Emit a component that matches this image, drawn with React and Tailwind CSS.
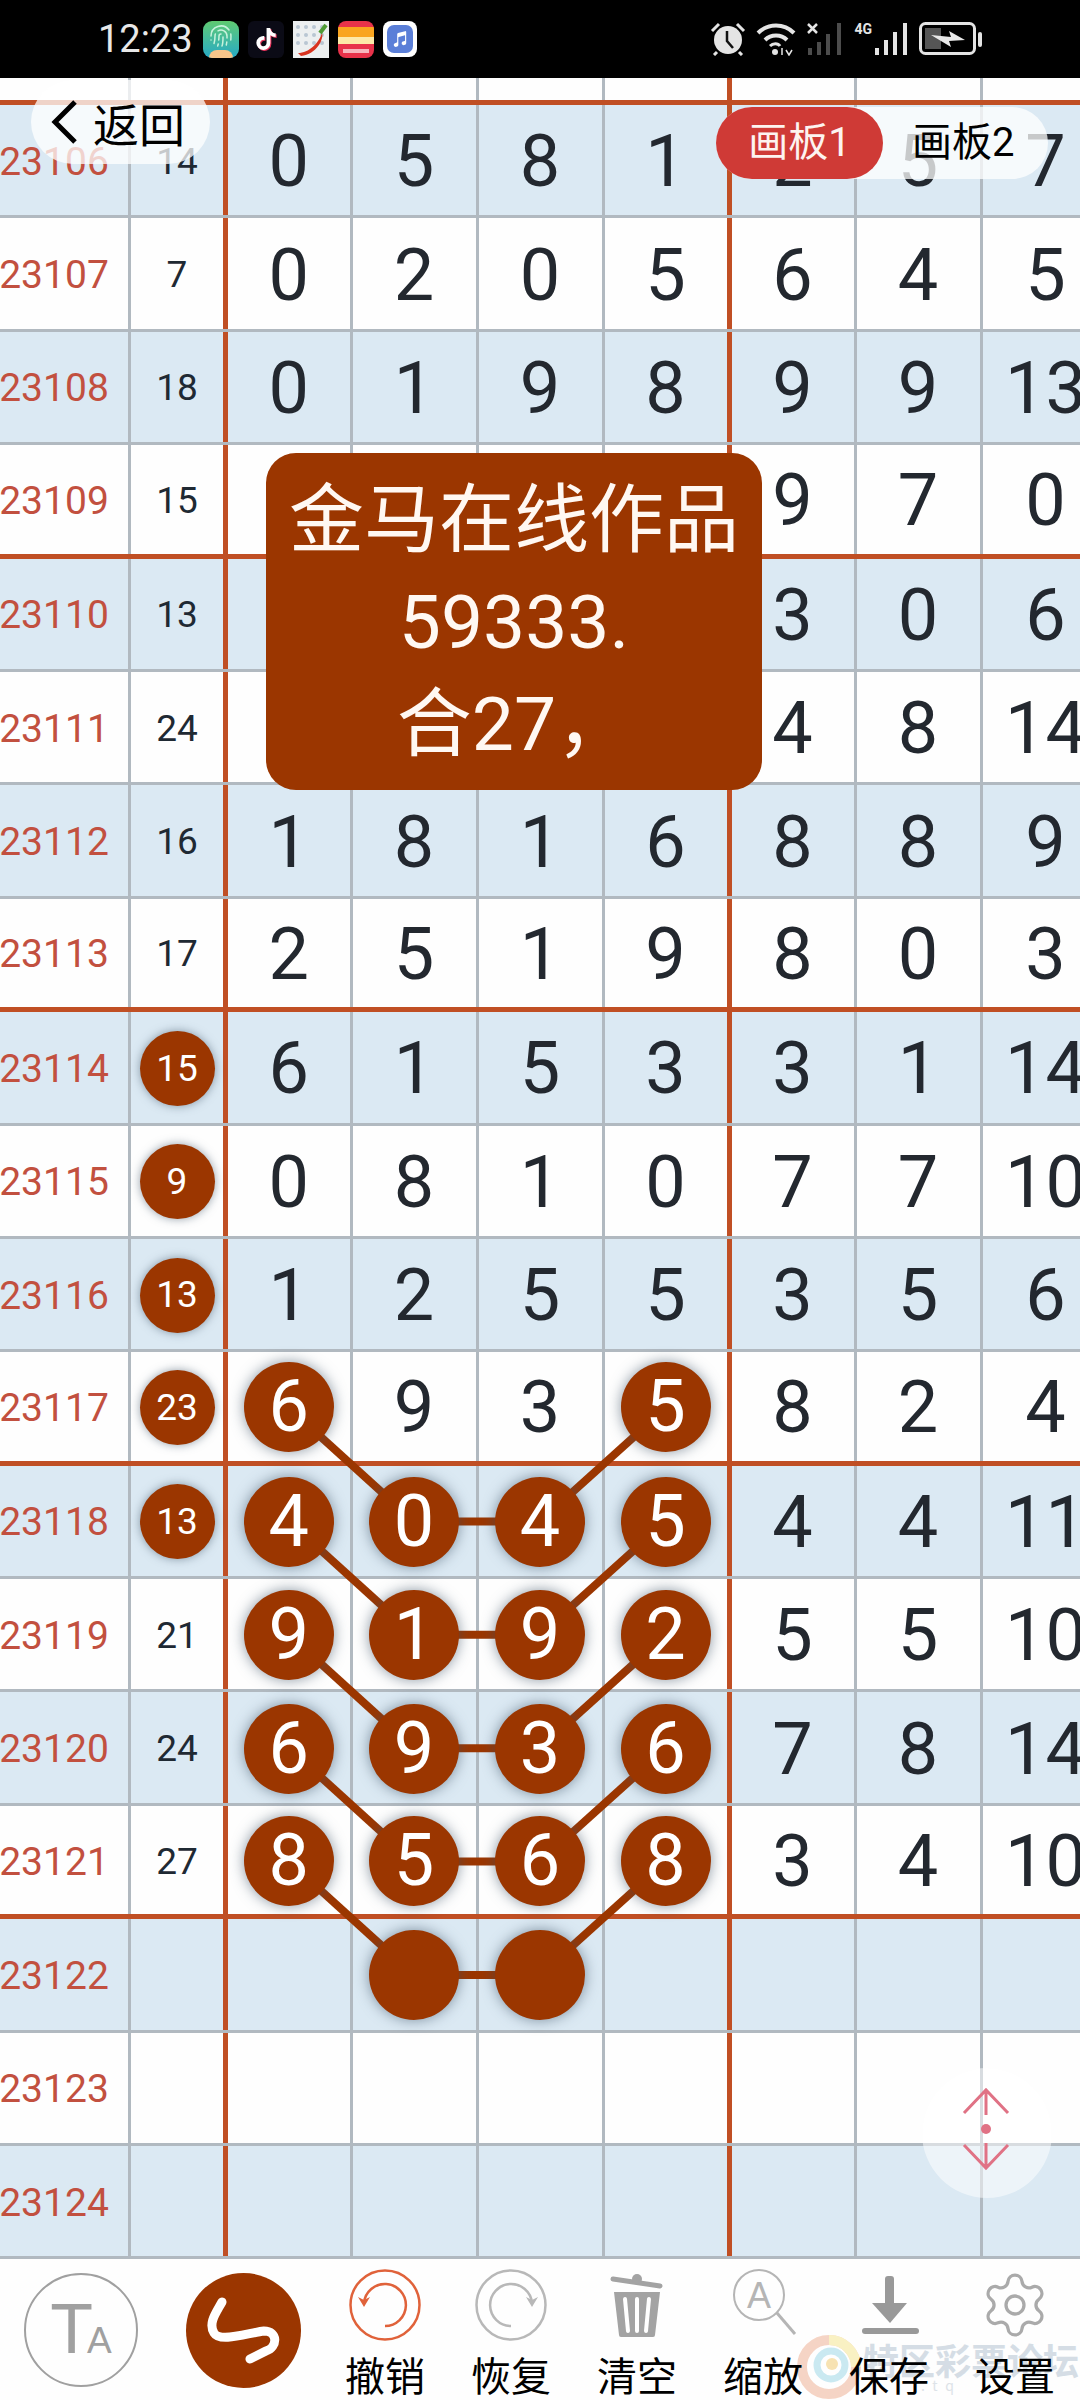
import React from "react";
import { Settings, Fingerprint } from "lucide-react";
import { FaTiktok } from "react-icons/fa";
import { IoMusicalNotes } from "react-icons/io5";

const FONT = "[font-family:Roboto,'Noto_Sans_CJK_SC',sans-serif]";
const CJK = "[font-family:'Noto_Sans_CJK_SC',sans-serif]";
const GRID =
  "-ml-[20px] w-[1108px] grid grid-cols-[151px_97px_124.5px_126px_126px_127px_125px_126px_126px]";

const rows = [
  { id: 23106, sum: 14, d: [0, 5, 8, 1, 2, 5, 7] },
  { id: 23107, sum: 7, d: [0, 2, 0, 5, 6, 4, 5] },
  { id: 23108, sum: 18, d: [0, 1, 9, 8, 9, 9, 13] },
  { id: 23109, sum: 15, d: ["", "", "", "", 9, 7, 0] },
  { id: 23110, sum: 13, d: ["", "", "", "", 3, 0, 6] },
  { id: 23111, sum: 24, d: ["", "", "", "", 4, 8, 14] },
  { id: 23112, sum: 16, d: [1, 8, 1, 6, 8, 8, 9] },
  { id: 23113, sum: 17, d: [2, 5, 1, 9, 8, 0, 3] },
  { id: 23114, sum: 15, hot: true, d: [6, 1, 5, 3, 3, 1, 14] },
  { id: 23115, sum: 9, hot: true, d: [0, 8, 1, 0, 7, 7, 10] },
  { id: 23116, sum: 13, hot: true, d: [1, 2, 5, 5, 3, 5, 6] },
  { id: 23117, sum: 23, hot: true, marks: [0, 3], d: [6, 9, 3, 5, 8, 2, 4] },
  { id: 23118, sum: 13, hot: true, marks: [0, 1, 2, 3], d: [4, 0, 4, 5, 4, 4, 11] },
  { id: 23119, sum: 21, marks: [0, 1, 2, 3], d: [9, 1, 9, 2, 5, 5, 10] },
  { id: 23120, sum: 24, marks: [0, 1, 2, 3], d: [6, 9, 3, 6, 7, 8, 14] },
  { id: 23121, sum: 27, marks: [0, 1, 2, 3], d: [8, 5, 6, 8, 3, 4, 10] },
  { id: 23122, marks: [1, 2], d: ["", "", "", "", "", "", ""] },
  { id: 23123, d: ["", "", "", "", "", "", ""] },
  { id: 23124, d: ["", "", "", "", "", "", ""] },
];

// centre of a digit cell on the page, used by the connecting lines
const colX = [289, 414, 540, 666];
const rowY = (k) => 1408 + (k - 11) * 113.4;

const Links = () => {
  const segs = [];
  for (let k = 11; k <= 15; k++) {
    segs.push([colX[0], rowY(k), colX[1], rowY(k + 1)]);
    segs.push([colX[3], rowY(k), colX[2], rowY(k + 1)]);
    segs.push([colX[1], rowY(k + 1), colX[2], rowY(k + 1)]);
  }
  return (
    <svg className="absolute inset-0 z-[5] pointer-events-none" width="1080" height="2400" viewBox="0 0 1080 2400">
      {segs.map((s, i) => (
        <line key={i} x1={s[0]} y1={s[1]} x2={s[2]} y2={s[3]} stroke="#9b3600" strokeWidth="8" />
      ))}
    </svg>
  );
};

const Cell = ({ thick, last, children }) => (
  <div
    className={`flex items-center justify-center ${
      thick
        ? "border-r-[5px] border-[#c04f24]"
        : last
          ? ""
          : "border-r-[3px] border-[#b1b9c0]"
    }`}
  >
    {children}
  </div>
);

const Row = ({ row, k }) => {
  const endsBlock = k % 4 === 0;
  return (
    <div
      className={`${GRID} h-[113.4px] ${row.id % 2 === 0 ? "bg-[#dbe9f3]" : "bg-[#fefefe]"} ${
        endsBlock ? "border-b-[5px] border-[#c04f24]" : "border-b-[3px] border-[#b1b9c0]"
      }`}
    >
      <Cell>
        <span className="pt-[4px] text-[39px] text-[#c2503f] leading-none">{row.id}</span>
      </Cell>
      <Cell thick>
        {row.hot ? (
          <div className="relative z-10 mt-[2px] w-[75px] h-[75px] rounded-full bg-[#9b3600] flex items-center justify-center text-[37px] text-white shadow-[0_0_10px_rgba(60,80,100,0.55)]">
            {row.sum}
          </div>
        ) : (
          <span className="pt-[2px] text-[37px] text-[#1f2933] leading-none">{row.sum}</span>
        )}
      </Cell>
      {row.d.map((v, i) => {
        const marked = row.marks && row.marks.includes(i);
        return (
          <Cell key={i} thick={i === 3} last={i === 6}>
            {marked ? (
              <div className="relative z-10 mt-[2px] w-[90px] h-[90px] rounded-full bg-[#9b3600] flex items-center justify-center text-[72px] leading-none text-white shadow-[0_0_14px_rgba(60,80,100,0.6)]">
                {v}
              </div>
            ) : (
              <span className="pt-[4px] text-[72px] leading-none text-[#23282f]">{v}</span>
            )}
          </Cell>
        );
      })}
    </div>
  );
};

const FillerRow = () => (
  <div className={`${GRID} h-[27px] bg-[#fefefe] border-b-[5px] border-[#c04f24]`}>
    <Cell />
    <Cell thick />
    <Cell />
    <Cell />
    <Cell />
    <Cell thick />
    <Cell />
    <Cell />
    <Cell last />
  </div>
);

const AppTiles = () => (
  <div className="flex items-center ml-[10px] gap-[9px]">
    <div className="relative w-[36px] h-[37px] rounded-[9px] overflow-hidden bg-gradient-to-b from-[#5fc96f] to-[#25a9c4] flex items-start justify-center pt-[3px]">
      <Fingerprint className="w-[24px] h-[24px] text-[#c8f2dc]" strokeWidth={1.5} />
      <div className="absolute left-[6px] bottom-[-8px] w-[24px] h-[16px] rounded-full bg-[#f7c58a]" />
    </div>
    <div className="w-[36px] h-[37px] bg-[#0b0b16] rounded-[6px] flex items-center justify-center">
      <FaTiktok className="w-[22px] h-[22px] text-white drop-shadow-[1px_1px_0_#e8325a]" />
    </div>
    <div className="w-[36px] h-[37px] bg-[#eceff0] overflow-hidden">
      <svg width="36" height="37" viewBox="0 0 36 37">
        {[6, 14, 22].map((y) =>
          [5, 13, 21, 29].map((x) => <circle key={`${x}-${y}`} cx={x} cy={y} r="2" fill="#b9c6d2" />)
        )}
        <path d="M5 32 C16 32 26 22 29 12 C31 18 24 33 8 35 Z" fill="#d8331f" />
        <path d="M27 12 L33 4" stroke="#4f9a35" strokeWidth="4" />
      </svg>
    </div>
    <div className="w-[36px] h-[37px] rounded-[8px] overflow-hidden bg-[#e8324a] flex flex-col">
      <div className="h-[6px]" />
      <div className="h-[10px] bg-[#f9a51f]" />
      <div className="h-[7px] bg-[#fde9a8]" />
      <div className="mt-[5px] mx-[5px] h-[4px] bg-[#f7b6bd]" />
    </div>
    <div className="w-[34px] h-[36px] rounded-[8px] bg-white flex items-center justify-center">
      <div className="w-[26px] h-[28px] rounded-[7px] bg-[#5b7fd8] flex items-center justify-center">
        <IoMusicalNotes className="w-[18px] h-[18px] text-white" />
      </div>
    </div>
  </div>
);

const StatusIcons = () => (
  <div className="flex items-center gap-[10px]">
    <svg width="36" height="34" viewBox="0 0 36 34">
      <circle cx="18" cy="18" r="14" fill="#e4e4e4" />
      <path d="M17 9 V19 L23 26" stroke="#111" strokeWidth="2.5" fill="none" />
      <path d="M2 9 L9 2 M27 2 L34 9 M7 30 L4 33 M29 30 L32 33" stroke="#e4e4e4" strokeWidth="3" />
    </svg>
    <svg width="40" height="34" viewBox="0 0 40 34">
      <path d="M2 11 C12 1 28 1 38 11" stroke="#e4e4e4" strokeWidth="4" fill="none" />
      <path d="M9 18 C15 12 25 12 31 18" stroke="#e4e4e4" strokeWidth="4" fill="none" />
      <path d="M14 24 C17 21 22 21 24 24" stroke="#e4e4e4" strokeWidth="3" fill="none" />
      <circle cx="19" cy="30" r="3" fill="#e4e4e4" />
      <path d="M26 26 L26 33 M30 28 L33 33 L36 28" stroke="#e4e4e4" strokeWidth="1.5" fill="none" />
    </svg>
    <svg width="38" height="34" viewBox="0 0 38 34">
      <path d="M2 2 L11 11 M11 2 L2 11" stroke="#e4e4e4" strokeWidth="2.5" />
      <rect x="2" y="26" width="4" height="7" fill="#4c4c4c" />
      <rect x="11" y="20" width="4" height="13" fill="#4c4c4c" />
      <rect x="20" y="12" width="4" height="21" fill="#4c4c4c" />
      <rect x="31" y="1" width="4" height="32" fill="#4c4c4c" />
    </svg>
    <div className="flex items-end gap-[1px] h-[34px]">
      <span className="self-start text-[14px] leading-none font-bold text-[#e4e4e4]">4G</span>
      <svg width="36" height="34" viewBox="0 0 36 34">
        <rect x="2" y="26" width="4" height="7" fill="#e4e4e4" />
        <rect x="11" y="18" width="4" height="15" fill="#e4e4e4" />
        <rect x="20" y="10" width="4" height="23" fill="#e4e4e4" />
        <rect x="30" y="1" width="4" height="32" fill="#e4e4e4" />
      </svg>
    </div>
    <svg width="64" height="34" viewBox="0 0 64 34">
      <rect x="1.5" y="1.5" width="54" height="30" rx="5" stroke="#e4e4e4" strokeWidth="3" fill="none" />
      <rect x="6" y="6" width="16" height="21" fill="#555" />
      <path d="M12 13 L32 15 L30 9 L46 18 L30 19 L32 25 Z" fill="#e8e8e8" />
      <rect x="59" y="10" width="4" height="15" rx="2" fill="#e4e4e4" />
    </svg>
  </div>
);

const UndoIcon = ({ color, flip }) => (
  <svg width="72" height="72" viewBox="0 0 72 72">
    <g transform={flip ? "translate(72,0) scale(-1,1)" : undefined}>
      <circle cx="36" cy="36" r="34.5" fill="none" stroke={color} strokeWidth="2.5" />
      <path d="M36 57 A21 21 0 1 0 15 34" fill="none" stroke={color} strokeWidth="2.5" />
      <path d="M9 28 L15 38 L21 28 L15 31 Z" fill={color} />
    </g>
  </svg>
);

const TrashIcon = () => (
  <svg width="72" height="72" viewBox="0 0 72 72">
    <path d="M12 10 L59 17" stroke="#a3a3a3" strokeWidth="5" strokeLinecap="round" />
    <circle cx="36" cy="10" r="5" fill="#a3a3a3" />
    <path d="M13 23 H59 L54 66 Q54 68 52 68 H20 Q18 68 18 66 Z" fill="#a3a3a3" />
    <path d="M24 30 L27 62 M36 30 V62 M48 30 L45 62" stroke="#fff" strokeWidth="4" strokeLinecap="round" />
  </svg>
);

const ZoomIcon = () => (
  <svg width="72" height="72" viewBox="0 0 72 72">
    <circle cx="32" cy="26" r="25" fill="none" stroke="#b5b5b5" strokeWidth="2" />
    <path d="M50 44 L68 65" stroke="#b5b5b5" strokeWidth="3" />
    <text x="32" y="39" textAnchor="middle" fontSize="36" fontFamily="Liberation Sans" fill="#b5b5b5">
      A
    </text>
  </svg>
);

const SaveIcon = () => (
  <svg width="72" height="72" viewBox="0 0 72 72">
    <rect x="32" y="7" width="9" height="30" rx="3" fill="#999" />
    <path d="M19 34 H54 L37 54 Z" fill="#999" />
    <rect x="9" y="59" width="57" height="6" rx="3" fill="#999" />
  </svg>
);

const tools = [
  { label: "撤销", icon: <UndoIcon color="#e0623a" /> },
  { label: "恢复", icon: <UndoIcon color="#b8b8b8" flip /> },
  { label: "清空", icon: <TrashIcon /> },
  { label: "缩放", icon: <ZoomIcon /> },
  { label: "保存", icon: <SaveIcon /> },
  { label: "设置", icon: <Settings className="w-[72px] h-[72px] text-[#aaaaaa]" strokeWidth={1.1} /> },
];

const Toolbar = () => (
  <div className="relative flex-1 bg-[#fefefe] flex items-start">
    {/* faint forum watermark behind the labels */}
    <div className="absolute left-[797px] top-[76px] flex items-start">
      <svg width="64" height="64" viewBox="0 0 64 64" className="opacity-60">
        <circle cx="32" cy="32" r="27" fill="none" stroke="#f0b9a0" strokeWidth="10" />
        <path d="M32 5 A27 27 0 0 1 59 32" fill="none" stroke="#f6ea9c" strokeWidth="10" />
        <circle cx="34" cy="30" r="14" fill="none" stroke="#a8dcea" strokeWidth="7" />
        <circle cx="35" cy="29" r="6" fill="#f4d080" />
      </svg>
      <div className={`${CJK} flex flex-col`}>
        <span className="ml-[2px] mt-[6px] text-[36px] leading-[36px] font-bold text-[#d5dde5] whitespace-nowrap">
          特区彩票论坛
        </span>
        <span className="ml-[60px] text-[14px] leading-[16px] text-[#dde3e8] tracking-[8px]">.tq</span>
      </div>
    </div>

    <div className="ml-[24px] mt-[14px] w-[114px] h-[114px] rounded-full border-2 border-[#a0a0a0] flex items-center justify-center text-[#a0a0a0] [font-family:'Liberation_Sans',sans-serif]">
      <div className="flex items-baseline mt-[-2px]">
        <span className="text-[70px] leading-none">T</span>
        <span className="text-[37px] leading-none -ml-[6px]">A</span>
      </div>
    </div>
    <div className="ml-[48px] mt-[14px] w-[115px] h-[115px] rounded-full bg-[#9b3600]">
      <svg width="115" height="115" viewBox="0 0 115 115">
        <path
          d="M36 29 C30 40 22 50 28 60 C34 70 62 60 78 58 C92 58 92 74 80 78 L64 86"
          fill="none"
          stroke="#fff"
          strokeWidth="9"
          strokeLinecap="round"
        />
      </svg>
    </div>
    <div className="ml-[21px] flex relative z-10">
      {tools.map((t) => (
        <div key={t.label} className="w-[126px] pt-[10px] flex flex-col items-center">
          <div className="w-[72px] h-[72px]">{t.icon}</div>
          <span className={`${CJK} mt-[11px] text-[40px] leading-[44px] text-black`}>{t.label}</span>
        </div>
      ))}
    </div>
  </div>
);

const App = () => (
  <div className={`${FONT} relative w-[1080px] h-[2400px] overflow-hidden flex flex-col bg-white`}>
    <div className="h-[78px] shrink-0 bg-black pl-[98px] pr-[97px] flex items-center justify-between">
      <div className="flex items-center">
        <span className="text-[38px] leading-none text-[#e8e8e8]">12:23</span>
        <AppTiles />
      </div>
      <StatusIcons />
    </div>

    <FillerRow />
    {rows.map((row, k) => (
      <Row key={row.id} row={row} k={k + 1} />
    ))}
    <Toolbar />

    <Links />

    {/* back pill */}
    <div className={`${CJK} absolute z-20 left-[31px] top-[80px] w-[179px] h-[84px] rounded-full bg-white/75 flex items-center pl-[19px] text-[46px] text-black`}>
      <svg width="28" height="44" viewBox="0 0 28 44">
        <path d="M25 2 L5 22 L25 42" fill="none" stroke="#000" strokeWidth="5" />
      </svg>
      <span className="ml-[15px] leading-none">返回</span>
    </div>

    {/* board switch */}
    <div className={`${CJK} absolute z-20 left-[716px] top-[107px] w-[332px] h-[72px] rounded-full bg-white/75 flex items-center text-[40px]`}>
      <div className="w-[167px] h-[72px] rounded-full bg-[#cf3a36] text-[#fdf3f0] flex items-center justify-center">
        <span className="[font-family:Roboto,'Noto_Sans_CJK_SC',sans-serif]">画板1</span>
      </div>
      <span className="ml-[29px] text-black [font-family:Roboto,'Noto_Sans_CJK_SC',sans-serif]">画板2</span>
    </div>

    {/* pinned note */}
    <div className="absolute z-20 left-[266px] top-[453px] w-[496px] h-[337px] rounded-[30px] bg-[#9b3600] text-[#fff8f2] text-[75px] leading-[102px] text-center flex flex-col justify-center">
      <span className="block">金马在线作品</span>
      <span className="block">59333.</span>
      <span className="block">合27，</span>
    </div>

    {/* scroll handle */}
    <div className="absolute z-20 left-[922px] top-[2068px] w-[130px] h-[130px] rounded-full bg-white/50">
      <svg width="130" height="130" viewBox="0 0 130 130">
        <path d="M42 45 L64 22 L86 45 M64 22 V47" fill="none" stroke="#e07285" strokeWidth="3" />
        <circle cx="64" cy="61" r="5" fill="#e07285" />
        <path d="M42 77 L64 100 L86 77 M64 100 V75" fill="none" stroke="#e07285" strokeWidth="3" />
      </svg>
    </div>
  </div>
);

export default App;
